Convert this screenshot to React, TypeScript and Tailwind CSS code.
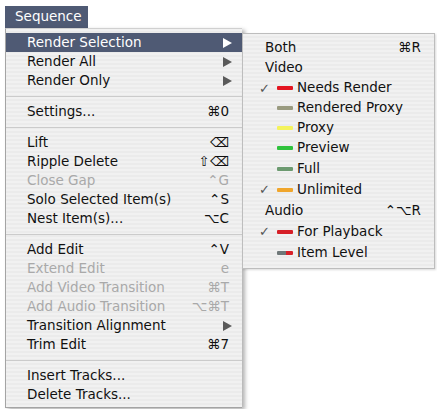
import React from 'react';

type MenuItem =
  | { kind: 'sep' }
  | { kind: 'item'; label: string; shortcut?: string; submenu?: boolean; disabled?: boolean; active?: boolean };

const sep: MenuItem = { kind: 'sep' };

const mainItems: MenuItem[] = [
  { kind: 'item', label: 'Render Selection', submenu: true, active: true },
  { kind: 'item', label: 'Render All', submenu: true },
  { kind: 'item', label: 'Render Only', submenu: true },
  sep,
  { kind: 'item', label: 'Settings...', shortcut: '⌘0' },
  sep,
  { kind: 'item', label: 'Lift', shortcut: '⌫' },
  { kind: 'item', label: 'Ripple Delete', shortcut: '⇧⌫' },
  { kind: 'item', label: 'Close Gap', shortcut: '⌃G', disabled: true },
  { kind: 'item', label: 'Solo Selected Item(s)', shortcut: '⌃S' },
  { kind: 'item', label: 'Nest Item(s)...', shortcut: '⌥C' },
  sep,
  { kind: 'item', label: 'Add Edit', shortcut: '⌃V' },
  { kind: 'item', label: 'Extend Edit', shortcut: 'e', disabled: true },
  { kind: 'item', label: 'Add Video Transition', shortcut: '⌘T', disabled: true },
  { kind: 'item', label: 'Add Audio Transition', shortcut: '⌥⌘T', disabled: true },
  { kind: 'item', label: 'Transition Alignment', submenu: true },
  { kind: 'item', label: 'Trim Edit', shortcut: '⌘7' },
  sep,
  { kind: 'item', label: 'Insert Tracks...' },
  { kind: 'item', label: 'Delete Tracks...' },
];

interface SubItem {
  label: string;
  header?: boolean;
  shortcut?: string;
  checked?: boolean;
  bar?: string;
  tall?: boolean;
}

const subItems: SubItem[] = [
  { label: 'Both', header: true, shortcut: '⌘R' },
  { label: 'Video', header: true },
  { label: 'Needs Render', checked: true, bar: 'bg-[#e3141f]' },
  { label: 'Rendered Proxy', bar: 'bg-[#999a7f]' },
  { label: 'Proxy', bar: 'bg-[#f4f35c]' },
  { label: 'Preview', bar: 'bg-[#2fc23c]' },
  { label: 'Full', bar: 'bg-[#6c9a70]', tall: true },
  { label: 'Unlimited', checked: true, bar: 'bg-[#f0a62c]', tall: true },
  { label: 'Audio', header: true, shortcut: '⌃⌥R', tall: true },
  { label: 'For Playback', checked: true, bar: 'bg-[#d61f27]', tall: true },
  { label: 'Item Level', bar: 'bg-[linear-gradient(to_right,#6f7879_55%,#d8222a_55%)]', tall: true },
];

// aqua pinstripe, kept faint
const stripes =
  'bg-[repeating-linear-gradient(to_bottom,#f1f1f1_0px,#f1f1f1_2px,#ebebeb_2px,#ebebeb_4px)]';

function Arrow({ light }: { light?: boolean }) {
  return (
    <svg width="9" height="10" viewBox="0 0 9 10" className="shrink-0">
      <polygon points="0,0 9,5 0,10" fill={light ? '#ffffff' : '#5a5a5a'} />
    </svg>
  );
}

function MainRow({ item }: { item: MenuItem }) {
  if (item.kind === 'sep') {
    return (
      <div className="h-[12px] flex items-center">
        <div className="h-px w-full bg-[#cbcbcb]" />
      </div>
    );
  }
  const color = item.active ? 'text-white' : item.disabled ? 'text-[#a9a9a9]' : 'text-[#111]';
  return (
    <div
      className={`h-[19px] flex items-center justify-between pl-[21px] ${
        item.submenu ? 'pr-[10px]' : 'pr-[13px]'
      } ${item.active ? 'bg-[#4f5a74]' : ''} ${color}`}
    >
      <span>{item.label}</span>
      {item.submenu ? <Arrow light={item.active} /> : <span>{item.shortcut}</span>}
    </div>
  );
}

function SubRow({ item }: { item: SubItem }) {
  const h = item.tall ? 'h-[21px]' : 'h-[20px]';
  if (item.header) {
    return (
      <div className={`${h} flex items-center justify-between pl-[22px] pr-[13px]`}>
        <span>{item.label}</span>
        <span>{item.shortcut}</span>
      </div>
    );
  }
  return (
    <div className={`${h} flex items-center pl-[16px]`}>
      <span className="w-[17px] text-[#555] text-[13px] font-bold">{item.checked ? '✓' : ''}</span>
      <span className={`ml-[1px] w-[16px] h-[4px] rounded-[1px] ${item.bar}`} />
      <span className="ml-[4px]">{item.label}</span>
    </div>
  );
}

export default function App() {
  return (
    <div className="min-h-[409px] bg-white pl-[5px] pt-[6px] text-[13.5px] leading-none font-['DejaVu_Sans',sans-serif]">
      <div className="w-[83px] h-[22px] bg-[#4f5a74] text-white flex items-center pl-[10px]">Sequence</div>
      <div className="relative w-[237px]">
        <div
          className={`w-[237px] pt-[4px] pb-[3px] border-l border-b border-[#a4a4a4] border-t border-t-[#d0d0d0] shadow-[3px_2px_4px_rgba(0,0,0,0.3)] ${stripes}`}
        >
          {mainItems.map((item, i) => (
            <MainRow key={i} item={item} />
          ))}
        </div>
        <div
          className={`absolute left-[237px] top-[5px] w-[193px] pt-[4px] pb-[5px] border border-[#bdbdbd] text-[#111] shadow-[1px_1px_2px_rgba(0,0,0,0.15)] ${stripes}`}
        >
          {subItems.map((item, i) => (
            <SubRow key={i} item={item} />
          ))}
        </div>
      </div>
    </div>
  );
}
